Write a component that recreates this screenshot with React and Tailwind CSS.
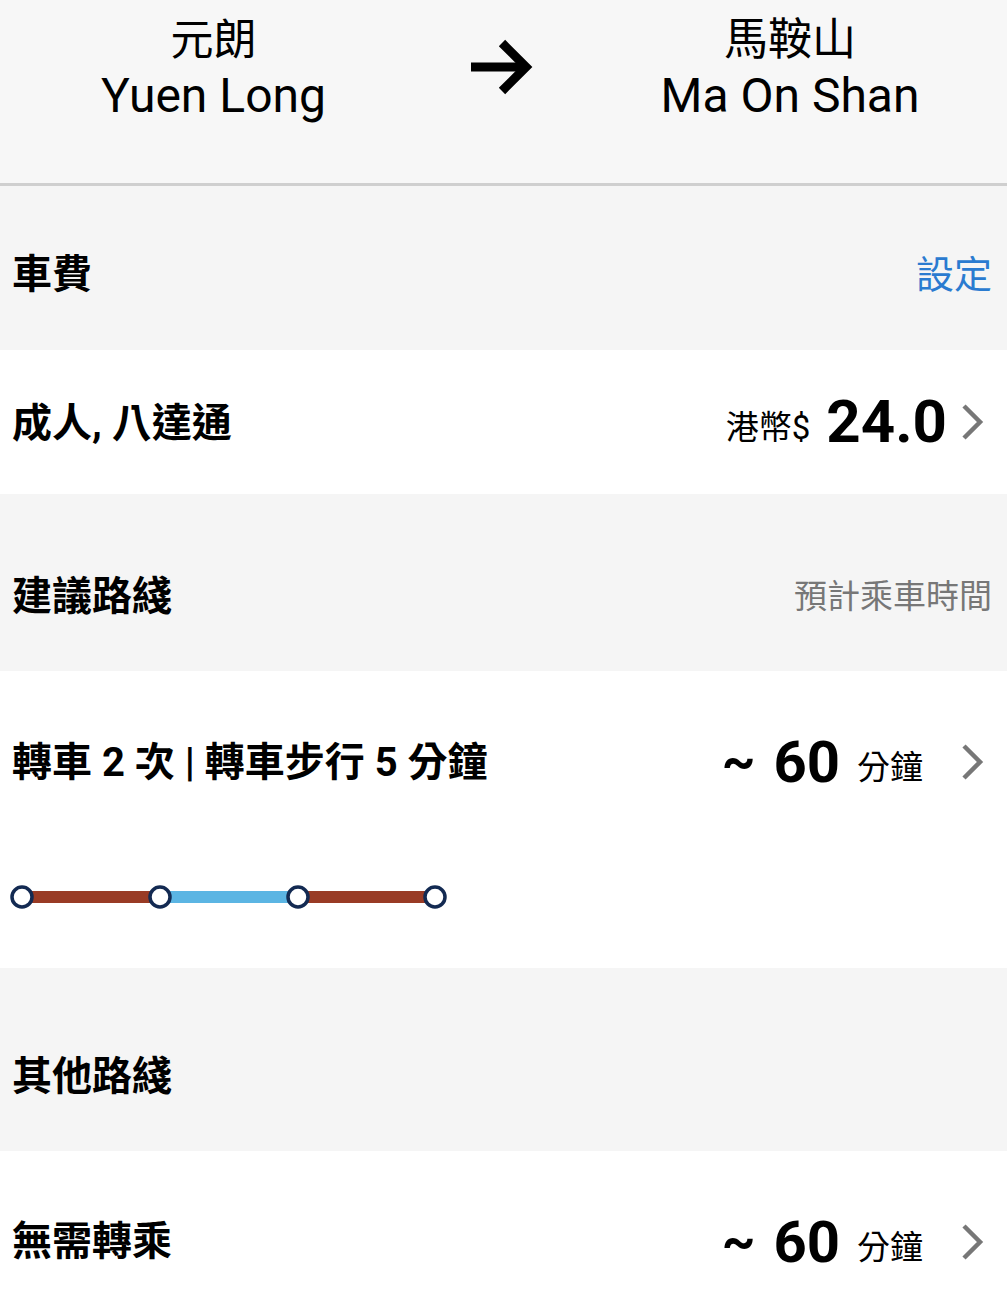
import React from "react";

const F = { fontFamily: 'Roboto, "Noto Sans CJK TC", sans-serif' };

function Chevron() {
  return (
    <svg width="26" height="40" viewBox="0 0 26 40" className="shrink-0">
      <path d="M5 4 L21 20 L5 36" fill="none" stroke="#777777" strokeWidth="4.5" strokeLinecap="butt" />
    </svg>
  );
}

function Minutes() {
  return (
    <div className="flex items-center">
      <span className="text-[52px] font-bold text-black leading-none mr-[18px]">~</span>
      <span className="text-[58px] font-bold text-black leading-none">60</span>
      <span className="text-[33px] text-black leading-none ml-[17px] mt-[10px]">分鐘</span>
      <div className="ml-[36px]"><Chevron /></div>
    </div>
  );
}

function RouteLine() {
  const xs = [22, 160, 298, 435];
  return (
    <svg width="460" height="30" viewBox="0 0 460 30">
      <rect x="22" y="9" width="138" height="12" fill="#993b25" />
      <rect x="160" y="9" width="138" height="12" fill="#5bb5e3" />
      <rect x="298" y="9" width="137" height="12" fill="#993b25" />
      {xs.map((x) => (
        <circle key={x} cx={x} cy="15" r="10" fill="#ffffff" stroke="#132a52" strokeWidth="3.5" />
      ))}
    </svg>
  );
}

export default function App() {
  return (
    <div className="w-[1007px] h-[1297px] overflow-hidden bg-white" style={F}>
      {/* header */}
      <div className="h-[183px] bg-[#f7f7f7] flex items-start">
        <div className="w-[427px] flex flex-col items-center pt-[12px]">
          <div className="text-[43px] leading-[56px] text-black">元朗</div>
          <div className="text-[48px] leading-[56px] text-black">Yuen Long</div>
        </div>
        <div className="w-[140px] flex justify-center pt-[38px] pl-[10px]">
          <svg width="66" height="58" viewBox="0 0 66 58">
            <path d="M2 29 L56 29" stroke="#000" strokeWidth="9" />
            <path d="M33 5 L57 29 L33 53" fill="none" stroke="#000" strokeWidth="9" strokeLinejoin="miter" />
          </svg>
        </div>
        <div className="flex-1 flex flex-col items-center pt-[12px] pl-[6px]">
          <div className="text-[44px] leading-[56px] text-black">馬鞍山</div>
          <div className="text-[48px] leading-[56px] text-black">Ma On Shan</div>
        </div>
      </div>
      <div className="h-[3px] bg-[#cfcfcf]" />

      {/* 車費 */}
      <div className="h-[164px] bg-[#f5f5f5] flex items-start justify-between pl-[12px] pr-[15px] pt-[66px]">
        <div className="text-[40px] leading-[46px] font-bold text-black">車費</div>
        <div className="text-[38px] leading-[46px] text-[#2a7bd0]">設定</div>
      </div>

      {/* fare */}
      <div className="h-[144px] bg-white flex items-center justify-between pl-[12px] pr-[22px]">
        <div className="text-[40px] font-bold text-black mt-[4px]">成人, 八達通</div>
        <div className="flex items-center">
          <span className="text-[33px] text-black mt-[12px]">港幣$</span>
          <span className="text-[60px] font-bold text-black leading-none ml-[16px]">24.0</span>
          <div className="ml-[12px]"><Chevron /></div>
        </div>
      </div>

      {/* 建議路綫 */}
      <div className="h-[177px] bg-[#f5f5f5] flex items-start justify-between pl-[12px] pr-[15px] pt-[80px]">
        <div className="text-[40px] leading-[46px] font-bold text-black">建議路綫</div>
        <div className="text-[33px] leading-[46px] text-[#777777]">預計乘車時間</div>
      </div>

      {/* suggested route */}
      <div className="h-[297px] bg-white flex flex-col">
        <div className="flex items-center justify-between pl-[12px] pr-[22px] pt-[62px] h-[120px]">
          <div className="text-[40px] font-bold text-black mt-[2px]">轉車 2 次 | 轉車步行 5 分鐘</div>
          <Minutes />
        </div>
        <div className="pt-[91px]">
          <RouteLine />
        </div>
      </div>

      {/* 其他路綫 */}
      <div className="h-[183px] bg-[#f5f5f5] flex items-start pl-[12px] pt-[86px]">
        <div className="text-[40px] leading-[46px] font-bold text-black">其他路綫</div>
      </div>

      {/* other route */}
      <div className="h-[146px] bg-white flex items-start justify-between pl-[12px] pr-[22px] pt-[62px]">
        <div className="text-[40px] font-bold text-black leading-[58px]">無需轉乘</div>
        <Minutes />
      </div>
    </div>
  );
}
